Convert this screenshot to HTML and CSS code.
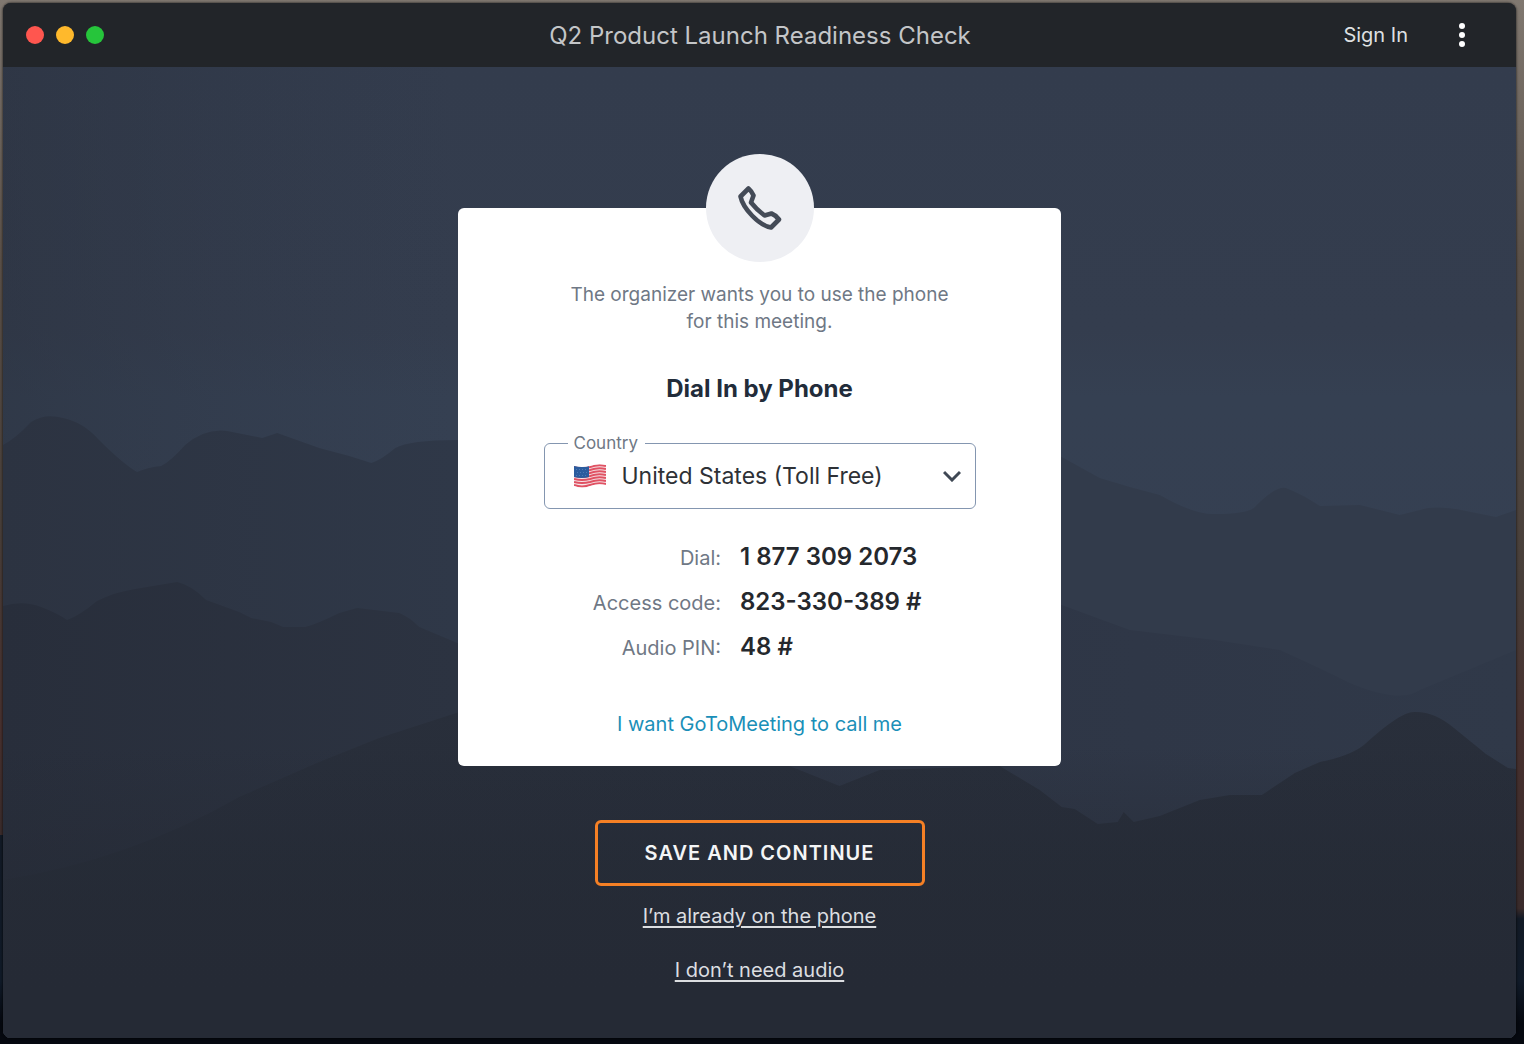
FILE: index.html
```html
<!DOCTYPE html>
<html lang="en">
<head>
<meta charset="utf-8">
<meta name="viewport" content="width=device-width, initial-scale=1">
<title>Q2 Product Launch Readiness Check</title>
<link rel="stylesheet" href="styles.css">
</head>
<body>
<div class="window">
  <header class="titlebar">
    <div class="lights" aria-hidden="true">
      <span class="light light-close"></span>
      <span class="light light-min"></span>
      <span class="light light-max"></span>
    </div>
    <h1 class="title">Q2 Product Launch Readiness Check</h1>
    <div class="actions">
      <a class="signin" href="#">Sign In</a>
      <button class="menu" type="button" aria-label="Menu">
        <svg width="8" height="24" viewBox="0 0 8 24" fill="#fff" aria-hidden="true"><circle cx="4" cy="3" r="3"/><circle cx="4" cy="12" r="3"/><circle cx="4" cy="21" r="3"/></svg>
      </button>
    </div>
  </header>

  <main class="stage">
    <svg class="scenery" viewBox="4 67 1512 971" preserveAspectRatio="none" aria-hidden="true">
      <defs>
        <linearGradient id="sky" x1="0" y1="0" x2="0" y2="1">
          <stop offset="0" stop-color="#333c4d"/><stop offset=".27" stop-color="#343d4e"/><stop offset=".34" stop-color="#354052"/><stop offset="1" stop-color="#363f51"/>
        </linearGradient>
        <linearGradient id="shade" x1="0" y1="0" x2="1" y2="0">
          <stop offset="0" stop-color="#282e3a" stop-opacity=".4"/><stop offset=".3" stop-color="#2c3444" stop-opacity="0"/>
        </linearGradient>
        <linearGradient id="far" x1="0" y1="0" x2="1" y2="0">
          <stop offset="0" stop-color="#2c3341"/><stop offset=".3" stop-color="#2f3848"/><stop offset=".7" stop-color="#323b4b"/><stop offset="1" stop-color="#323b4b"/>
        </linearGradient>
        <linearGradient id="mid" x1="0" y1="0" x2="1" y2="0">
          <stop offset="0" stop-color="#282e3b"/><stop offset=".3" stop-color="#2c3341"/><stop offset=".75" stop-color="#2f3747"/><stop offset="1" stop-color="#303949"/>
        </linearGradient>
        <linearGradient id="near" x1="0" y1="0" x2="0" y2="1">
          <stop offset="0" stop-color="#292f3b"/><stop offset=".4" stop-color="#272d39"/><stop offset="1" stop-color="#252a35"/>
        </linearGradient>
        <linearGradient id="floor" x1="0" y1="0" x2="0" y2="1">
          <stop offset=".7" stop-color="#252a35" stop-opacity="0"/><stop offset=".95" stop-color="#252a35"/>
        </linearGradient>
      </defs>
      <rect x="4" y="67" width="1512" height="971" fill="url(#sky)"/>
      <rect x="4" y="67" width="1512" height="971" fill="url(#shade)"/>
      <path fill="url(#far)" d="M4 445Q16 439 32 422Q46 413 64 418Q84 422 100 440Q124 464 138 472Q150 467 162 466Q172 461 186 445Q206 428 228 431L263 438L278 433L320 448L350 456L372 463Q382 460 396 448Q410 440 458 440L600 410L900 400L1062 457L1100 478L1130 487L1160 495Q1195 515 1215 514Q1245 514 1254 508Q1275 486 1286 488Q1302 494 1320 506L1360 505L1400 515L1428 508Q1446 506 1466 511L1496 517L1516 510V1038H4Z"/>
      <path fill="url(#mid)" d="M4 606Q24 600 42 607Q58 613 68 620Q80 616 98 601Q116 592 136 589L178 582Q192 585 207 600L240 612L252 618L272 622L284 627H306Q318 624 340 613L358 608L400 613Q410 617 420 627L458 643L700 690L1000 590L1062 605L1130 630L1215 640L1280 650Q1320 668 1350 683Q1400 704 1420 690L1516 650V1038H4Z"/>
      <path fill="url(#near)" d="M4 880Q130 860 240 797L320 762L380 738L460 712L620 700L800 770L840 786L880 770L1000 766L1040 790L1062 807L1075 809L1098 824L1118 822L1124 812L1134 822L1160 816L1200 800L1230 795H1262L1295 773L1320 762Q1350 756 1364 745Q1400 712 1414 712Q1434 711 1454 728L1486 754L1508 768L1516 769V1038H4Z"/>
      <rect x="4" y="67" width="1512" height="971" fill="url(#floor)"/>
    </svg>

    <section class="card">
      <div class="badge">
        <svg width="54" height="54" viewBox="0 0 54 54" fill="none" stroke="#444b57" stroke-width="4.600" stroke-linejoin="round" aria-hidden="true"><path d="M15.500 7.500L7.500 15.500C10 27.500 26 44.500 38 46.500L46 38.500Q42.500 34 38.500 32.500L31.500 34.500Q24 29 18 21.500L20.500 14.500Q18.500 10 15.500 7.500Z"/></svg>
      </div>
      <p class="intro">The organizer wants you to use the phone for this meeting.</p>
      <h2 class="heading">Dial In by Phone</h2>
      <fieldset class="field">
        <legend class="legend"><label for="country">Country</label></legend>
        <div class="picker">
          <svg class="flag" width="34" height="26" viewBox="0 0 34 26" aria-hidden="true">
            <defs><clipPath id="wave"><path d="M1 3Q9 5 17 3Q25 0 33 2V22Q25 20 17 23Q9 26 1 23Z"/></clipPath></defs>
            <g clip-path="url(#wave)">
              <rect width="34" height="26" fill="#f6e6e9"/>
              <g fill="none" stroke="#e05263" stroke-width="2">
                <path d="M1 4Q9 6 17 4Q25 1 33 3M1 7Q9 9 17 7Q25 4 33 6M1 10Q9 12 17 10Q25 7 33 9M1 13Q9 15 17 13Q25 10 33 12M1 16Q9 18 17 16Q25 13 33 15M1 19Q9 21 17 19Q25 16 33 18M1 22Q9 25 17 22Q25 19 33 21"/>
              </g>
              <path fill="#2b5c9e" d="M1 2Q9 5 16 3V14Q9 16 1 14Z"/>
              <path stroke="#4d7ab5" stroke-dasharray="1 2" d="M3 6.500H15M4 9.500H15M3 12.500H15"/>
            </g>
          </svg>
          <select class="select" id="country"><option>United States (Toll Free)</option></select>
          <svg class="chevron" width="18" height="12" viewBox="0 0 18 12" fill="none" stroke="#3f4854" stroke-width="3" aria-hidden="true"><path d="M1 2L9 10L17 2"/></svg>
        </div>
      </fieldset>
      <dl class="details">
        <dt>Dial:</dt><dd>1 877 309 2073</dd>
        <dt>Access code:</dt><dd>823-330-389 #</dd>
        <dt>Audio PIN:</dt><dd>48 #</dd>
      </dl>
      <a class="callme" href="#">I want GoToMeeting to call me</a>
    </section>

    <button class="save" type="button">SAVE AND CONTINUE</button>
    <a class="option" href="#">I’m already on the phone</a>
    <a class="option" href="#">I don’t need audio</a>
  </main>
</div>
</body>
</html>
```
FILE: styles.css
```css
* { box-sizing: border-box; }

body {
  margin: 0;
  min-height: 100vh;
  padding: 3px 8px 6px 3px;
  display: flex;
  font-family: Inter, "Liberation Sans", sans-serif;
  font-size: 20px;
  background:
    linear-gradient(#807870, #5a5048 25%, #483f3a 50%, #47302e 70%, #3a2b2b 80%, #121a26 80%, #101a28 94%, #05080f 98%) left / 3px 100% no-repeat,
    linear-gradient(#807870, #5a5048 25%, #483f3a 55%, #47302e 70%, #3a2b2b 87%, #121a26 88%, #101a28 94%, #05080f 98%);
}

.window {
  flex: 1;
  display: flex;
  flex-direction: column;
  border-radius: 8px;
  overflow: hidden;
  background: #252a35;
  box-shadow: 0 0 2px 1px rgba(0, 0, 0, .4);
}

.titlebar {
  display: grid;
  grid-template-columns: 1fr auto 1fr;
  align-items: center;
  height: 64px;
  padding: 0 50px 0 23px;
  background: #222529;
}

.lights { display: flex; gap: 12px; }
.light { width: 18px; height: 18px; border-radius: 50%; }
.light-close { background: #ff564f; }
.light-min { background: #ffb92c; }
.light-max { background: #26c53b; }

.title {
  margin: 0 0 0 28px;
  font-size: 24px;
  font-weight: 400;
  color: #c4c6c8;
}

.actions {
  display: flex;
  justify-content: flex-end;
  align-items: center;
  gap: 50px;
}
.signin { color: #dfe0e2; text-decoration: none; }
.menu { display: flex; padding: 0; border: 0; background: none; }

.stage {
  position: relative;
  flex: 1;
  display: flex;
  flex-direction: column;
  align-items: center;
  padding: 141px 24px 24px;
}
.scenery { position: absolute; inset: 0; width: 100%; height: 100%; }
.stage > :not(.scenery) { position: relative; }

.card {
  width: 100%;
  max-width: 603px;
  display: flex;
  flex-direction: column;
  align-items: center;
  padding-bottom: 28px;
  border-radius: 6px;
  background: #fff;
  text-align: center;
}

.badge {
  display: grid;
  place-items: center;
  width: 108px;
  height: 108px;
  margin-top: -54px;
  border-radius: 50%;
  background: #eeeff3;
}

.intro {
  max-width: 400px;
  margin: 19px 0 0;
  font-size: 19px;
  line-height: 27px;
  color: #6f7885;
}

.heading {
  margin: 40px 0 0;
  font-size: 24px;
  line-height: 28px;
  font-weight: 700;
  color: #222c3a;
}

.field {
  width: 100%;
  max-width: 432px;
  margin: 29px 0 0;
  padding: 0;
  border: 1px solid #8496b0;
  border-radius: 6px;
  text-align: left;
}
.legend {
  margin-left: 23px;
  padding: 0 7px 0 6px;
  font-size: 17px;
  line-height: 22px;
  color: #6f7885;
}
.picker { display: grid; align-items: center; height: 65px; margin-top: -11px; }
.picker > * { grid-area: 1 / 1; }
.flag { margin-left: 28px; pointer-events: none; z-index: 1; }
.chevron { justify-self: end; margin-right: 14px; pointer-events: none; z-index: 1; }
.select {
  appearance: none;
  width: 100%;
  height: 100%;
  padding: 0 44px 0 77px;
  border: 0;
  background: transparent;
  font: inherit;
  font-size: 23px;
  color: #2e3136;
}

.details {
  display: grid;
  grid-template-columns: 263px 1fr;
  column-gap: 19px;
  align-items: baseline;
  width: 100%;
  margin: 26px 0 0;
  line-height: 43px;
}
.details dt { text-align: right; color: #6f7885; }
.details dd { margin: 0; text-align: left; font-size: 24px; font-weight: 600; color: #25282d; }

.callme {
  margin-top: 40px;
  line-height: 28px;
  color: #1a8fb8;
  text-decoration: none;
}

.save {
  min-width: 330px;
  height: 66px;
  margin: 54px 0 16px;
  border: 3px solid #f58025;
  border-radius: 6px;
  background: transparent;
  font: inherit;
  font-weight: 600;
  letter-spacing: 1px;
  color: #f4f5f6;
}

.option {
  margin-bottom: 26px;
  line-height: 28px;
  color: #dcdee1;
  text-decoration-thickness: 2px;
  text-underline-offset: 3px;
}
```
